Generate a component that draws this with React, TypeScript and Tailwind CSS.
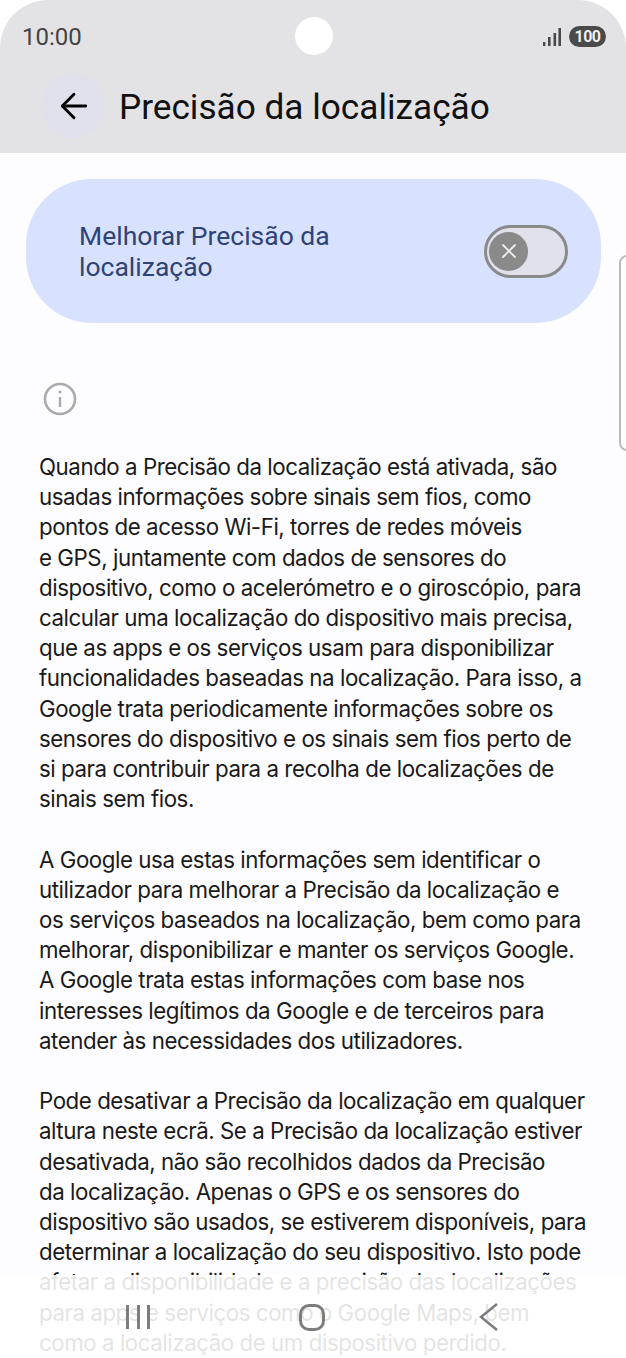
import { ArrowLeft } from "lucide-react";

const paragraphs = [
  [
    "Quando a Precisão da localização está ativada, são",
    "usadas informações sobre sinais sem fios, como",
    "pontos de acesso Wi-Fi, torres de redes móveis",
    "e GPS, juntamente com dados de sensores do",
    "dispositivo, como o acelerómetro e o giroscópio, para",
    "calcular uma localização do dispositivo mais precisa,",
    "que as apps e os serviços usam para disponibilizar",
    "funcionalidades baseadas na localização. Para isso, a",
    "Google trata periodicamente informações sobre os",
    "sensores do dispositivo e os sinais sem fios perto de",
    "si para contribuir para a recolha de localizações de",
    "sinais sem fios.",
  ],
  [
    "A Google usa estas informações sem identificar o",
    "utilizador para melhorar a Precisão da localização e",
    "os serviços baseados na localização, bem como para",
    "melhorar, disponibilizar e manter os serviços Google.",
    "A Google trata estas informações com base nos",
    "interesses legítimos da Google e de terceiros para",
    "atender às necessidades dos utilizadores.",
  ],
  [
    "Pode desativar a Precisão da localização em qualquer",
    "altura neste ecrã. Se a Precisão da localização estiver",
    "desativada, não são recolhidos dados da Precisão",
    "da localização. Apenas o GPS e os sensores do",
    "dispositivo são usados, se estiverem disponíveis, para",
    "determinar a localização do seu dispositivo. Isto pode",
    "afetar a disponibilidade e a precisão das localizações",
    "para apps e serviços como o Google Maps, bem",
    "como a localização de um dispositivo perdido.",
  ],
];

export default function App() {
  return (
    <div className="relative h-[1358px] w-[626px] overflow-hidden bg-white font-['Roboto',sans-serif]">
      <div className="h-[153px] rounded-t-[48px] bg-[#e3e3e6]">
        <div className="flex h-[73px] items-center justify-between pl-[22px] pr-[20px]">
          <span className="text-[24px] text-[#444]">10:00</span>
          <div className="flex items-center gap-[8px]">
            <svg width="18" height="18" viewBox="0 0 18 18" fill="#4a4a4a">
              <rect x="0" y="14" width="2.4" height="4" />
              <rect x="5" y="9" width="2.6" height="9" />
              <rect x="10.5" y="5" width="2.6" height="13" />
              <rect x="15.4" y="0" width="2.6" height="18" />
            </svg>
            <span className="flex h-[21px] w-[37px] items-center justify-center rounded-full bg-[#4a4a4a] text-[16px] font-bold tracking-[-0.5px] text-[#eee]">
              100
            </span>
          </div>
        </div>
        <div className="flex items-center pl-[42px]">
          <div className="flex h-[65px] w-[63px] items-center justify-center rounded-full bg-[#e1e1ec]">
            <ArrowLeft size={40} strokeWidth={1.7} className="text-black" />
          </div>
          <h1 className="ml-[14px] pt-[3px] text-[35.2px] font-normal text-[#111]">Precisão da localização</h1>
        </div>
      </div>

      <div className="h-[1205px] bg-[#fdfcff] pt-[26px]">
        <div className="mx-[26px] flex h-[144px] w-[575px] items-center justify-between rounded-[66px] bg-[#d8e2ff] pl-[53px] pr-[33px]">
          <p className="text-[26.5px] leading-[31px] text-[#2f4375]">
            Melhorar Precisão da
            <br />
            localização
          </p>
          <div className="flex h-[53px] w-[84px] items-center rounded-full border-[3.5px] border-[#8a8a8a] bg-[#e1e1ec] pl-[2px]">
            <div className="flex h-[39px] w-[39px] items-center justify-center rounded-full bg-[#8a8a8a]">
              <svg width="16" height="16" viewBox="0 0 16 16" stroke="#eee" strokeWidth="1.8" strokeLinecap="round">
                <path d="M2 2l12 12M14 2L2 14" />
              </svg>
            </div>
          </div>
        </div>

        <div className="ml-[42.5px] mt-[59px]">
          <svg className="block" width="34" height="34" viewBox="0 0 34 34" fill="none" stroke="#aaa" strokeWidth="2.6">
            <circle cx="17" cy="17" r="15" />
            <path d="M17 15v10" strokeWidth="2.4" />
            <circle cx="17" cy="10" r="1.6" fill="#aaa" stroke="none" />
          </svg>
        </div>

        <div className="ml-[39px] mt-[36px] flex flex-col gap-[30.2px] font-['Inter',sans-serif] text-[22.3px] leading-[30.2px] tracking-[-0.45px] text-[#1a1a1a]">
          {paragraphs.map((lines, i) => (
            <div key={i}>
              {lines.map((line) => (
                <div key={line} className="whitespace-nowrap">
                  {line}
                </div>
              ))}
            </div>
          ))}
        </div>
      </div>

      {/* camera */}
      <div className="absolute left-[294.5px] top-[17px] h-[38px] w-[38.5px] rounded-full bg-white" />

      {/* scroll handle on the right edge */}
      <div className="absolute left-[619px] top-[255px] h-[196px] w-[20px] rounded-[8px] border-2 border-[#bcbcbc]" />

      {/* nav bar over the text */}
      <div className="absolute bottom-0 left-0 right-0 h-[83px] bg-white/[0.88]">
        <div className="absolute left-[126px] top-[30px] flex gap-[7.5px]">
          <div className="h-[24px] w-[3px] bg-[#7d7d7d]" />
          <div className="h-[24px] w-[3px] bg-[#7d7d7d]" />
          <div className="h-[24px] w-[3px] bg-[#7d7d7d]" />
        </div>
        <div className="absolute left-[299px] top-[29px] h-[27px] w-[26px] rounded-[10px] border-[3px] border-[#7d7d7d]" />
        <svg className="absolute left-[479px] top-[28px]" width="20" height="28" viewBox="0 0 20 28" fill="none" stroke="#7d7d7d" strokeWidth="2.6">
          <path d="M18 1L2 14l16 13" />
        </svg>
      </div>
    </div>
  );
}
